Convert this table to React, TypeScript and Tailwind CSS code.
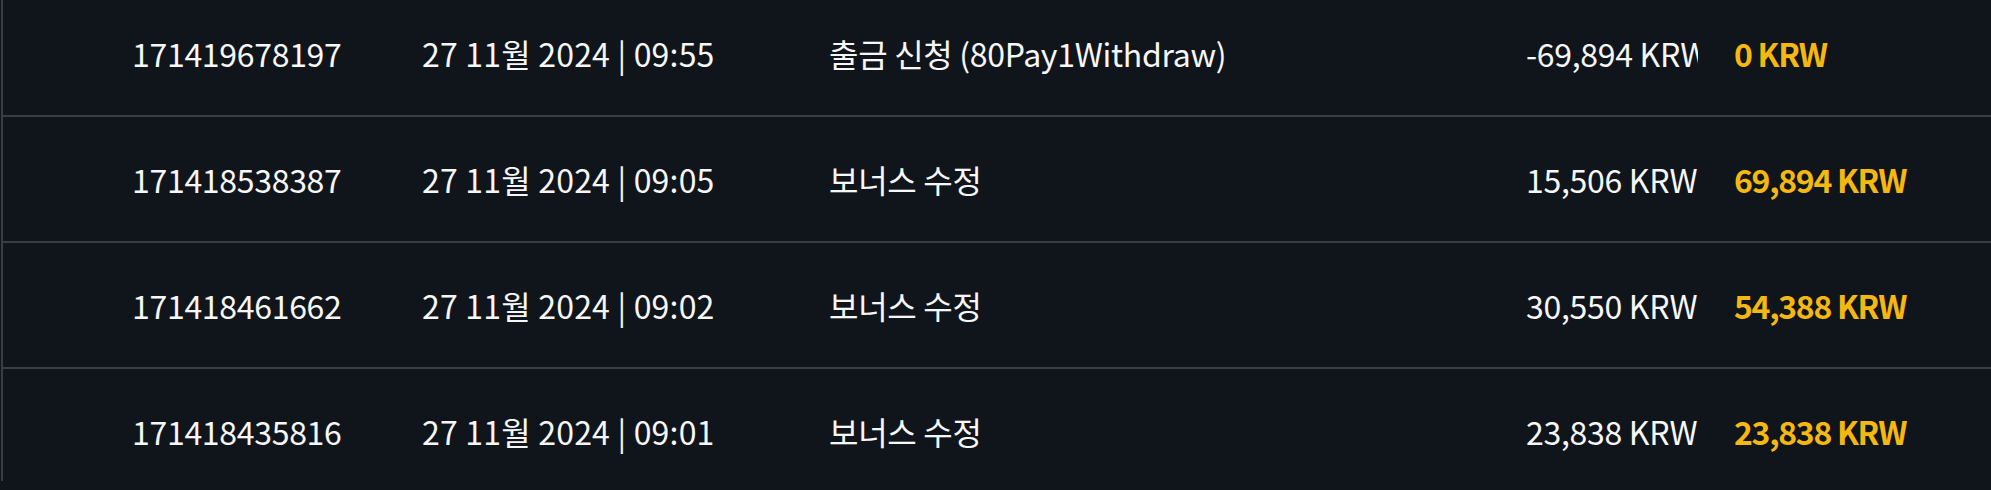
import React from "react";

type Row = { id: string; date: string; desc: string; amount: string; balance: string };

const rows: Row[] = [
  { id: "171419678197", date: "27 11월 2024 | 09:55", desc: "출금 신청 (80Pay1Withdraw)", amount: "-69,894 KRW", balance: "0 KRW" },
  { id: "171418538387", date: "27 11월 2024 | 09:05", desc: "보너스 수정", amount: "15,506 KRW", balance: "69,894 KRW" },
  { id: "171418461662", date: "27 11월 2024 | 09:02", desc: "보너스 수정", amount: "30,550 KRW", balance: "54,388 KRW" },
  { id: "171418435816", date: "27 11월 2024 | 09:01", desc: "보너스 수정", amount: "23,838 KRW", balance: "23,838 KRW" },
];

export default function App() {
  return (
    <div
      className="w-[1991px] h-[490px] overflow-hidden bg-[#10151b] text-[#f7f7f7]"
      style={{ fontFamily: '"Noto Sans CJK KR", "Noto Sans", sans-serif' }}
    >
      <div className="ml-px h-full border-l-2 border-[#3a3d41] -mt-[9px]">
        {rows.map((r) => (
          <div
            key={r.id}
            className="flex h-[126px] items-center border-b-2 border-[#3a3d41] pl-[129px] text-[32px] tracking-[-0.3px] whitespace-nowrap"
          >
            <div className="w-[290px]">{r.id}</div>
            <div className="w-[407px] tracking-[0.2px]">{r.date}</div>
            <div className="w-[697px]">{r.desc}</div>
            <div className="w-[172px] overflow-hidden">{r.amount}</div>
            <div className="ml-[36px] font-semibold tracking-[-1.3px] text-[#f5b811]">{r.balance}</div>
          </div>
        ))}
      </div>
    </div>
  );
}
